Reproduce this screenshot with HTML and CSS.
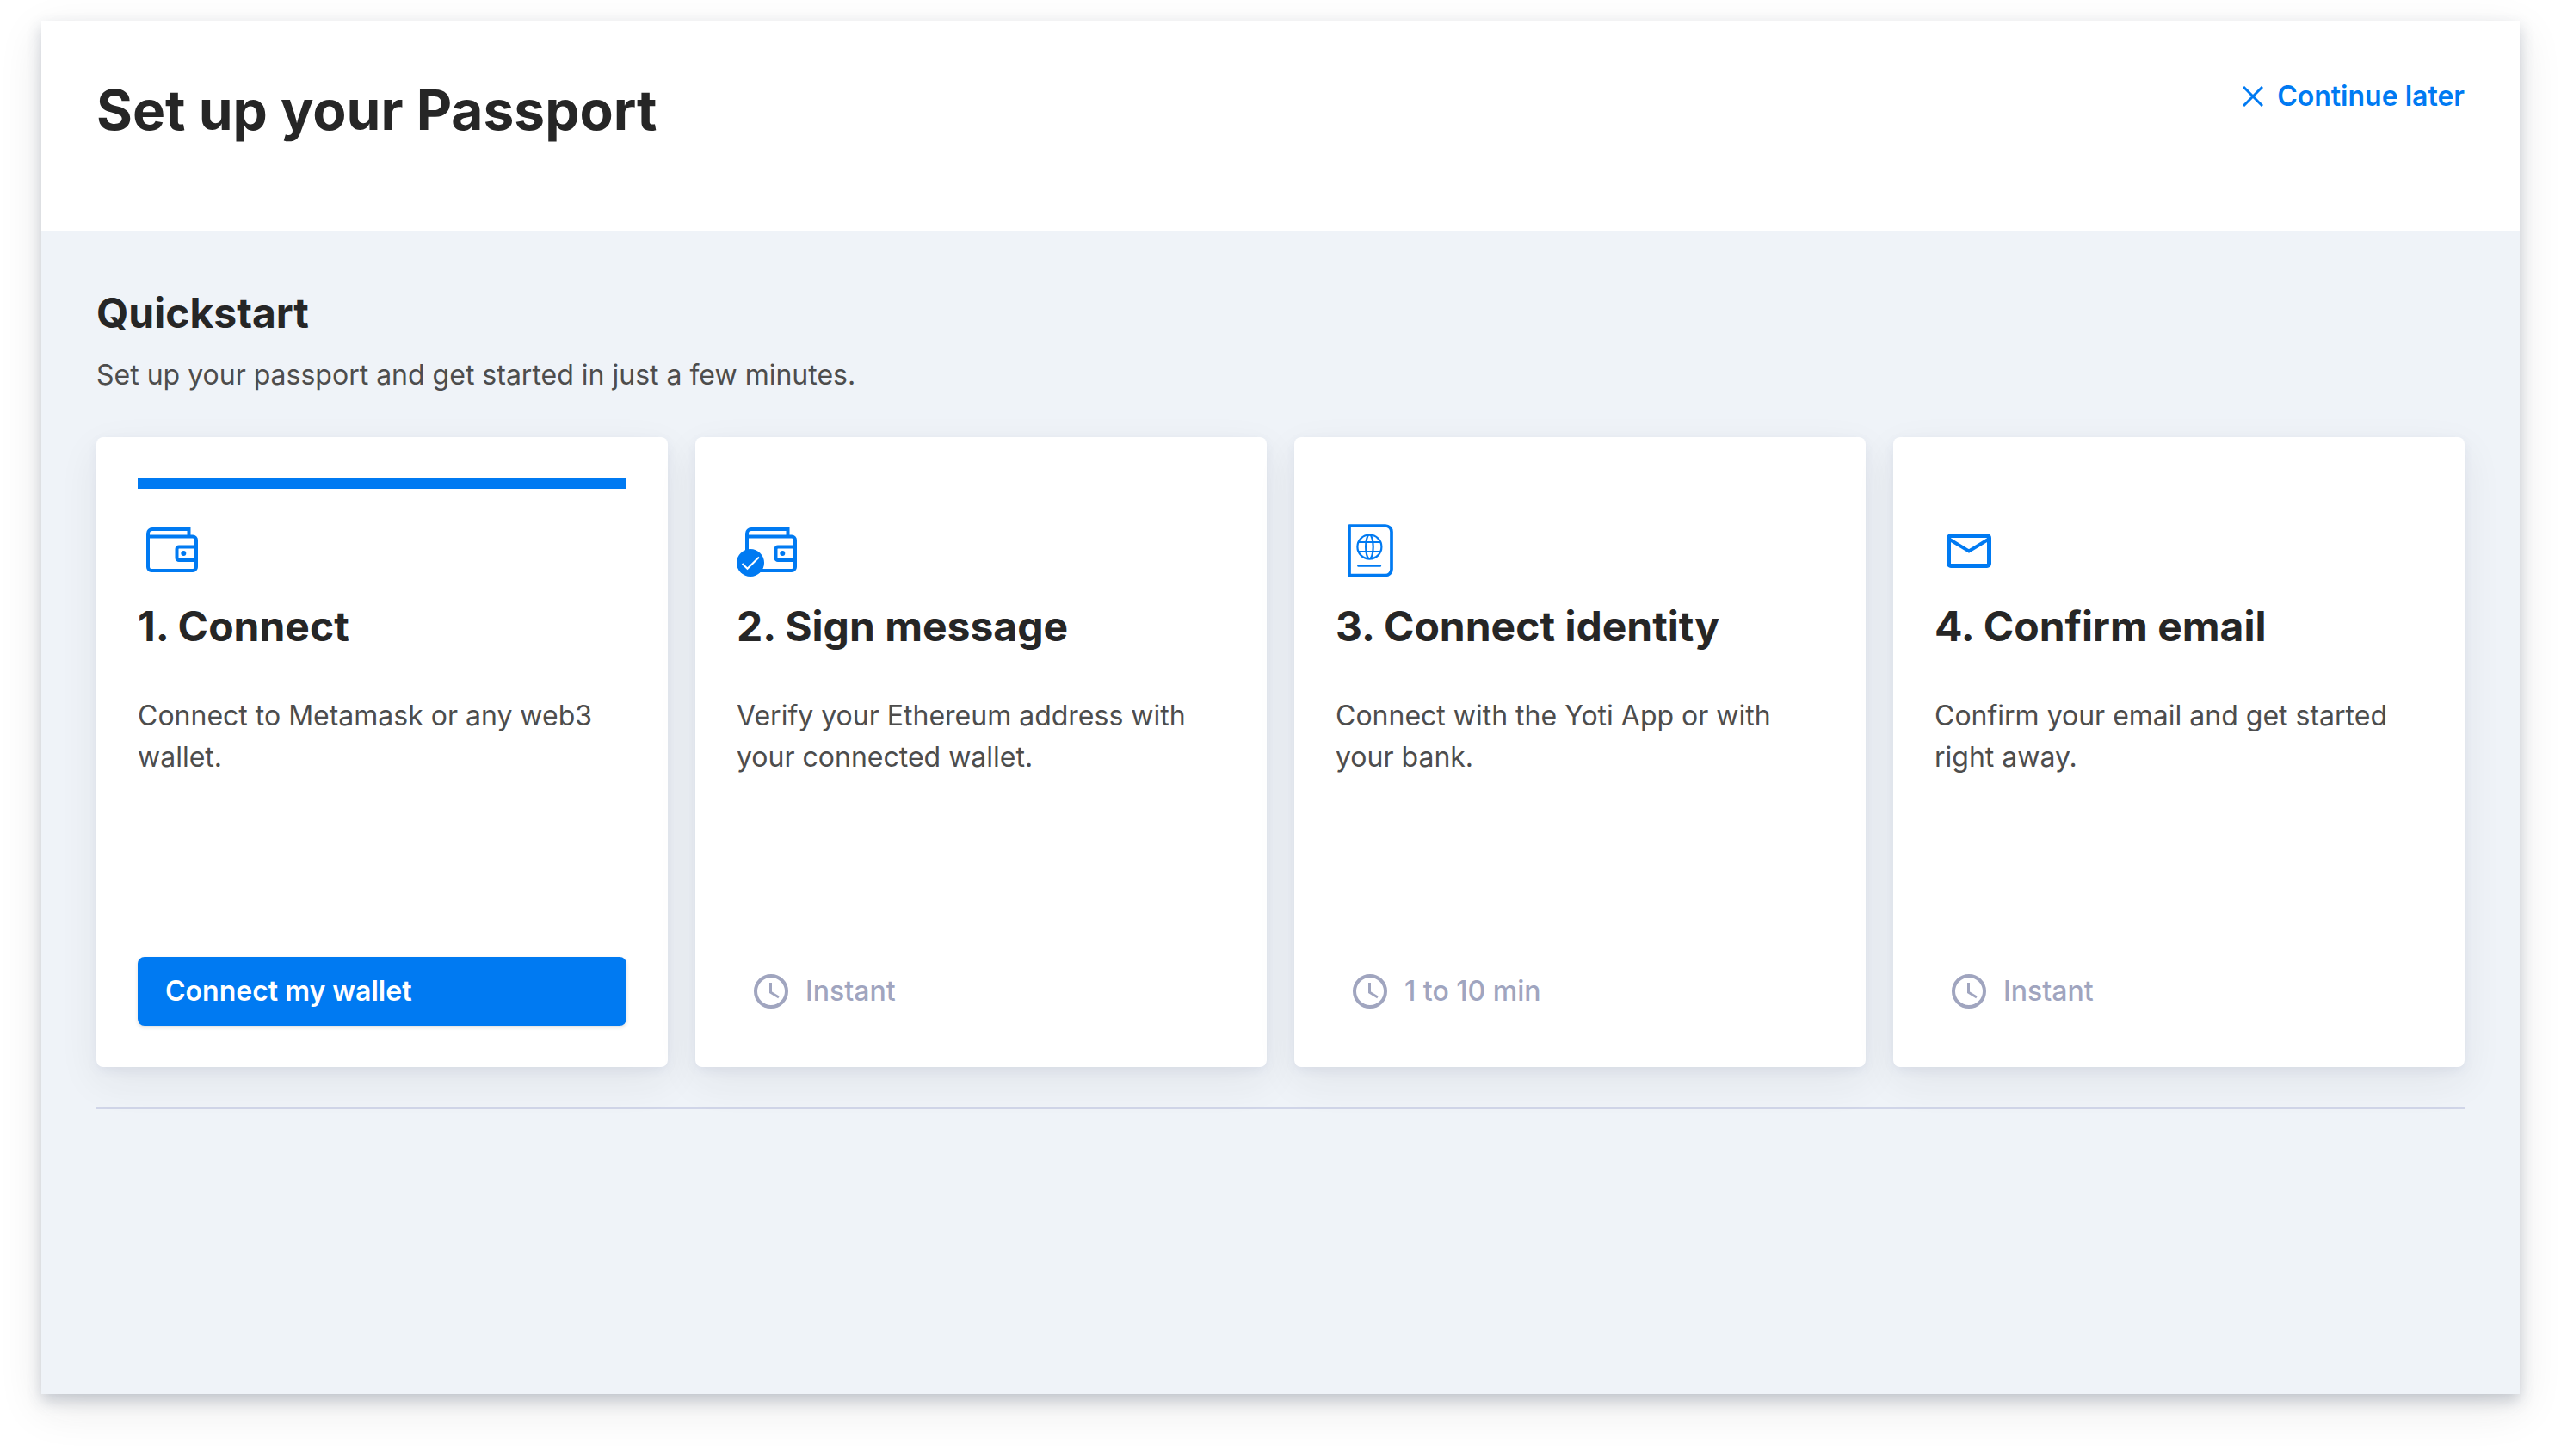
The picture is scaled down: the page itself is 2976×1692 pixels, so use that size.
FILE: index.html
```html
<!DOCTYPE html>
<html lang="en">
<head>
  <meta charset="utf-8">
  <title>Set up your Passport</title>
  <meta name="viewport" content="width=device-width, initial-scale=1">
  <link rel="stylesheet" href="styles.css">
</head>
<body>
  <svg width="0" height="0" class="sprite" aria-hidden="true">
    <symbol id="wallet" viewBox="0 0 80 80">
      <g fill="none" stroke="currentColor" stroke-width="4">
        <path d="M12 24V20a5 5 0 0 1 5-5H59.500V23"/>
        <path d="M12 23.500H64a4 4 0 0 1 4 4V59a4 4 0 0 1-4 4H16a4 4 0 0 1-4-4Z"/>
        <path d="M68 35.500H48a2.500 2.500 0 0 0-2.500 2.500V48.500a2.500 2.500 0 0 0 2.500 2.500H68"/>
      </g>
      <circle cx="53.300" cy="43" r="3" fill="currentColor"/>
    </symbol>
    <symbol id="clock" viewBox="0 0 48 48">
      <circle cx="24" cy="24" r="18" fill="none" stroke="currentColor" stroke-width="4"/>
      <path d="M23.500 14V25.200L33 31" fill="none" stroke="currentColor" stroke-width="3"/>
    </symbol>
  </svg>

  <main class="panel">
    <header class="panel-header">
      <h1>Set up your Passport</h1>
      <button type="button" class="later">
        <svg class="later-icon" viewBox="0 0 24 24" aria-hidden="true"><path d="M1 1L23 23M23 1L1 23" fill="none" stroke="currentColor" stroke-width="3"/></svg>
        Continue later
      </button>
    </header>

    <section class="panel-body">
      <h2>Quickstart</h2>
      <p class="intro">Set up your passport and get started in just a few minutes.</p>

      <ol class="steps">
        <li class="card card-active">
          <svg class="icon" aria-hidden="true"><use href="#wallet"/></svg>
          <h3>1. Connect</h3>
          <p>Connect to Metamask or any web3 wallet.</p>
          <button type="button" class="primary">Connect my wallet</button>
        </li>
        <li class="card">
          <svg class="icon" viewBox="0 0 80 80" aria-hidden="true">
            <use href="#wallet" width="80" height="80"/>
            <circle cx="16" cy="54" r="16" fill="currentColor"/>
            <path d="M6.500 55L12.500 60.800L26 47.500" fill="none" stroke="#fff" stroke-width="2"/>
          </svg>
          <h3>2. Sign message</h3>
          <p>Verify your Ethereum address with your connected wallet.</p>
          <div class="duration"><svg class="clock" aria-hidden="true"><use href="#clock"/></svg>Instant</div>
        </li>
        <li class="card">
          <svg class="icon" viewBox="0 0 80 80" aria-hidden="true" fill="none" stroke="currentColor">
            <path d="M16 11H58a7 7 0 0 1 7 7V61.500a7 7 0 0 1-7 7H16Z" stroke-width="3.700" stroke-linejoin="round"/>
            <g stroke-width="2.200">
              <circle cx="39.400" cy="35.500" r="14"/>
              <ellipse cx="39.400" cy="35.500" rx="4.300" ry="14"/>
              <path d="M26.500 30H52.300M26.500 41H52.300"/>
            </g>
            <path d="M26.500 57.400H51.800" stroke-width="2.600" stroke-linecap="round"/>
          </svg>
          <h3>3. Connect identity</h3>
          <p>Connect with the Yoti App or with your bank.</p>
          <div class="duration"><svg class="clock" aria-hidden="true"><use href="#clock"/></svg>1 to 10 min</div>
        </li>
        <li class="card">
          <svg class="icon" viewBox="0 0 80 80" aria-hidden="true" fill="none" stroke="currentColor">
            <rect x="16.500" y="22.500" width="47" height="35" rx="2.500" stroke-width="5"/>
            <path d="M17 26.500L40 40.500L63 26.500" stroke-width="4"/>
          </svg>
          <h3>4. Confirm email</h3>
          <p>Confirm your email and get started right away.</p>
          <div class="duration"><svg class="clock" aria-hidden="true"><use href="#clock"/></svg>Instant</div>
        </li>
      </ol>
      <hr>
    </section>
  </main>
</body>
</html>
```
FILE: styles.css
```css
* {
  box-sizing: border-box;
}

body {
  display: flex;
  min-height: 100vh;
  margin: 0;
  padding: 24px 48px 72px;
  background: #fff;
  color: #4d4d4d;
  font: 400 32px/48px Inter, "Liberation Sans", sans-serif;
}

.sprite {
  position: absolute;
}

h1,
h2,
h3,
p {
  margin: 0;
}

h1,
h2,
h3 {
  color: #262626;
  font-weight: 700;
}

h1 {
  font-size: 64px;
  line-height: 80px;
}

h2,
h3 {
  font-size: 48px;
  line-height: 64px;
}

button {
  border: 0;
  font: inherit;
  cursor: pointer;
}

.panel {
  display: flex;
  flex: 1;
  flex-direction: column;
  min-width: 0;
  box-shadow: 0 16px 48px rgba(38, 38, 38, 0.1), 0 8px 16px rgba(60, 75, 105, 0.24);
}

.panel-header {
  display: flex;
  align-items: flex-start;
  justify-content: space-between;
  padding: 64px 64px 100px;
  background: #fff;
}

.later {
  display: flex;
  align-items: center;
  gap: 16px;
  padding: 0;
  background: none;
  color: #007af2;
  font-weight: 600;
}

.later-icon {
  width: 24px;
  height: 24px;
}

.panel-body {
  flex: 1;
  padding: 64px;
  background: #eff3f8;
}

.intro {
  margin: 16px 0 48px;
}

.steps {
  display: grid;
  grid-template-columns: repeat(4, minmax(0, 1fr));
  gap: 32px;
  margin: 0;
  padding: 0;
  list-style: none;
}

.card {
  display: flex;
  flex-direction: column;
  min-height: 732px;
  padding: 48px;
  border-radius: 8px;
  background: #fff;
  box-shadow: 0 16px 48px rgba(38, 38, 38, 0.07), 0 4px 12px rgba(80, 95, 150, 0.08);
}

.card::before {
  content: "";
  height: 12px;
  margin-bottom: 32px;
}

.card-active::before {
  background: #007af2;
}

.icon {
  width: 80px;
  height: 80px;
  margin-bottom: 16px;
  color: #007af2;
}

.card h3 {
  margin-bottom: 48px;
}

.primary,
.duration {
  min-height: 80px;
  margin-top: auto;
}

.primary {
  padding: 16px 32px;
  border-radius: 8px;
  background: #007af2;
  box-shadow: 0 2px 4px rgba(38, 38, 38, 0.14);
  color: #fff;
  font-weight: 600;
  text-align: left;
}

.duration {
  display: flex;
  align-items: center;
  gap: 16px;
  padding: 0 16px;
  color: #a0a5bf;
  font-weight: 500;
}

.clock {
  width: 48px;
  height: 48px;
}

hr {
  height: 2px;
  margin: 47px 0 0;
  border: 0;
  background: #d0d5e8;
}
```
